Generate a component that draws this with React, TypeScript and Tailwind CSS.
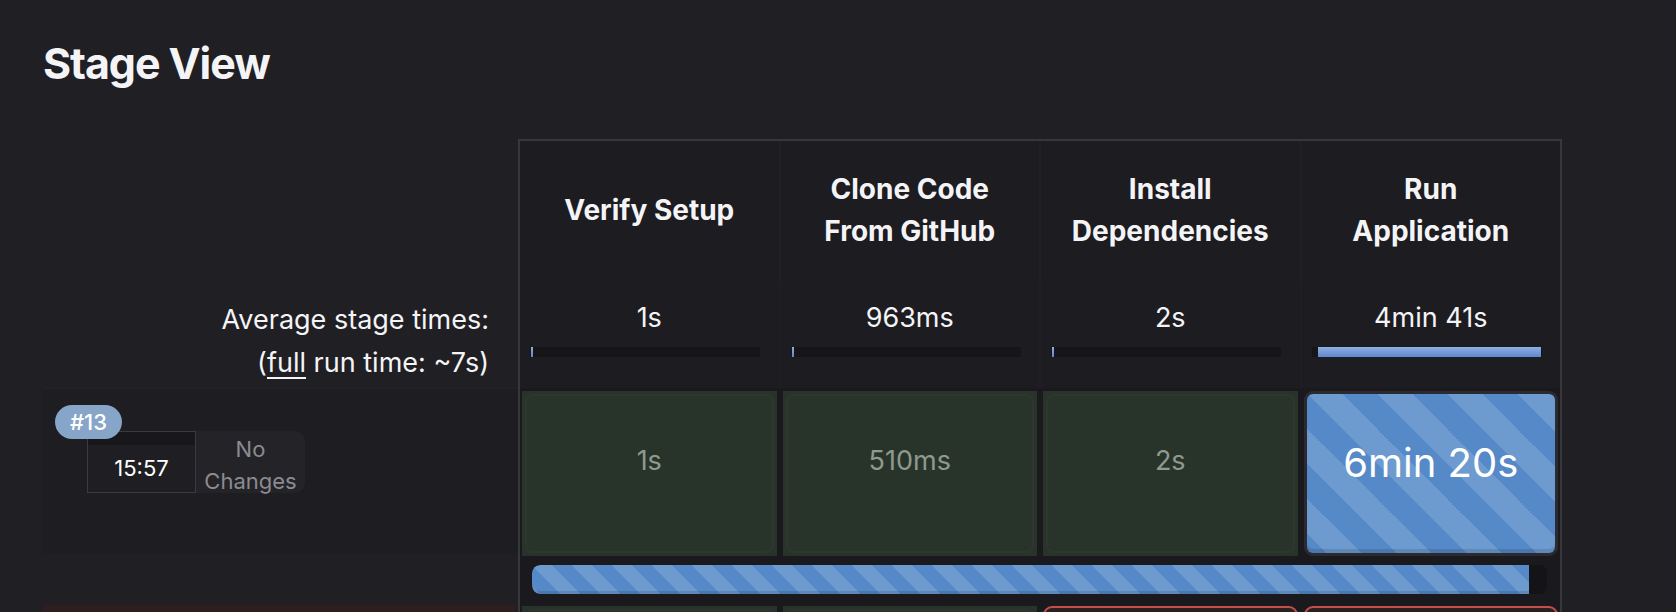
import React from 'react'

type Stage = { name: string[]; avg: string; pct: number }

const STAGES: Stage[] = [
  { name: ['Verify Setup'], avg: '1s', pct: 0 },
  { name: ['Clone Code', 'From GitHub'], avg: '963ms', pct: 0 },
  { name: ['Install', 'Dependencies'], avg: '2s', pct: 0 },
  { name: ['Run', 'Application'], avg: '4min 41s', pct: 97 },
]

const STRIPES =
  'bg-[#5589c7] bg-[linear-gradient(45deg,rgba(255,255,255,.15)_25%,transparent_25%,transparent_50%,rgba(255,255,255,.15)_50%,rgba(255,255,255,.15)_75%,transparent_75%,transparent)]'

function GreenCell({ text }: { text?: string }) {
  return (
    <div className="h-[165px] bg-[#283429] p-[3px]">
      <div className="flex h-full items-center justify-center rounded-[8px] border-2 border-[#2f3631] pb-[24px] text-[27px] text-[#8e998f]">
        {text}
      </div>
    </div>
  )
}

function RunningCell({ text }: { text: string }) {
  return (
    <div className="h-[165px] rounded-[9px] border-[3px] border-[#2a2a30] bg-[#1c1c21]">
      <div
        className={`flex h-full items-center justify-center rounded-[6px] ${STRIPES} bg-[length:70px_70px] pb-[22px] text-[40px] text-white shadow-[inset_0_-4px_0_rgba(0,0,0,0.12)]`}
      >
        {text}
      </div>
    </div>
  )
}

function FailedCell() {
  return <div className="h-[165px] rounded-[9px] border-2 border-[#c4504c] bg-[#2c1f20]" />
}

export default function App() {
  return (
    <div className="min-h-screen bg-[#1f1f24] pl-[43px] pt-[34px] font-['Inter',sans-serif] text-[#f4f4f6]">
      <h2 className="text-[43px] font-bold leading-[58px] tracking-[-0.025em]">Stage View</h2>

      <div className="mt-[47px]">
        {/* stage names */}
        <div className="flex">
          <div className="w-[475px] shrink-0" />
          <div className="grid h-[142px] w-[1044px] grid-cols-4 gap-[2px] border-x-2 border-t-2 border-[#37373c] bg-[#202025]">
            {STAGES.map(s => (
              <div key={s.avg} className="flex flex-col items-center justify-center bg-[#1c1c21] pb-[2px] text-center text-[28px] font-bold leading-[42px]">
                {s.name.map(line => (
                  <span key={line}>{line}</span>
                ))}
              </div>
            ))}
          </div>
        </div>

        {/* average times */}
        <div className="flex">
          <div className="w-[475px] shrink-0 pr-[29px] pt-[17px] text-right text-[27px] leading-[43px]">
            <div>Average stage times:</div>
            <div>
              (<span className="underline underline-offset-[5px]">full</span> run time: ~7s)
            </div>
          </div>
          <div className="grid h-[107px] w-[1044px] grid-cols-4 gap-[2px] border-x-2 border-[#37373c] bg-[#1e1e23]">
            {STAGES.map(s => (
              <div key={s.avg} className="bg-[#1c1c21] pt-[16px]">
                <div className="text-center text-[27px] leading-[42px]">{s.avg}</div>
                <div className="ml-[10px] mt-[8px] h-[10px] w-[230px] bg-[#161619]">
                  <div
                    className="h-full bg-[linear-gradient(#8fb0e2,#5f86cf)]"
                    style={{ width: s.pct > 0 ? `${s.pct}%` : '2px', marginLeft: s.pct > 0 ? '6px' : '1px' }}
                  />
                </div>
              </div>
            ))}
          </div>
        </div>

        {/* build #13 */}
        <div className="flex">
          <div className="w-[475px] shrink-0">
            <div className="relative h-[166px] border-t border-[#232328] bg-[#1d1d22]">
              <span className="absolute left-[12px] top-[16px] z-10 flex h-[34px] w-[67px] items-center justify-center rounded-full bg-[#87a5c9] text-[22px] font-medium text-white">
                #13
              </span>
              <div className="ml-[44px] mt-[42px] flex h-[62px]">
                <div className="flex w-[109px] flex-col border border-[#3a3a3f] bg-[#1e1e23]">
                  <div className="h-[13px] bg-[#18181c]" />
                  <div className="flex flex-1 items-center justify-center text-[22px] text-white">15:57</div>
                </div>
                <div className="flex w-[109px] flex-col items-center rounded-r-[10px] bg-[#232328] pt-[2px] text-center text-[22px] leading-[32px] text-[#8b8b90]">
                  <span>No</span>
                  <span>Changes</span>
                </div>
              </div>
            </div>
          </div>
          <div className="grid h-[168px] w-[1044px] grid-cols-4 gap-[6px] border-x-2 border-[#37373c] bg-[#1a1a1e] px-[2px] pt-[3px]">
            <GreenCell text="1s" />
            <GreenCell text="510ms" />
            <GreenCell text="2s" />
            <RunningCell text="6min 20s" />
          </div>
        </div>

        {/* build progress */}
        <div className="flex">
          <div className="w-[475px] shrink-0" />
          <div className="h-[48px] w-[1044px] border-x-2 border-[#37373c] bg-[#1a1a1e] pl-[12px] pr-[13px] pt-[9px]">
            <div className="h-[29px] overflow-hidden rounded-[8px] bg-[#141417]">
              <div
                className={`h-full rounded-l-[8px] ${STRIPES} bg-[length:40px_40px] shadow-[inset_0_-3px_0_rgba(0,0,0,0.12)]`}
                style={{ width: '98.2%' }}
              />
            </div>
          </div>
        </div>

        {/* previous build, only its top edge is in view */}
        <div className="flex">
          <div className="w-[475px] shrink-0 pt-[1px]">
            <div className="h-[163px] w-[472px] bg-[#2e1e1f]" />
          </div>
          <div className="grid h-[168px] w-[1044px] grid-cols-4 gap-[6px] border-x-2 border-[#37373c] bg-[#1a1a1e] px-[2px] pt-[2px]">
            <GreenCell />
            <GreenCell />
            <FailedCell />
            <FailedCell />
          </div>
        </div>
      </div>
    </div>
  )
}
